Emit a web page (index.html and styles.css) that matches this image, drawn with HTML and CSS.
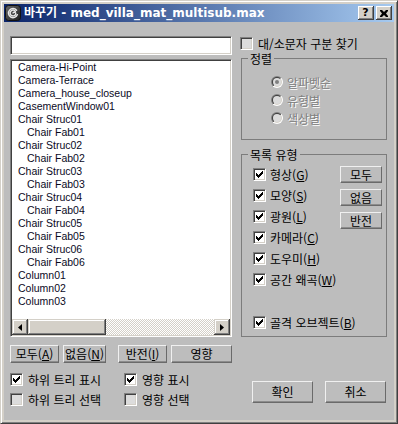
FILE: index.html
```html
<!DOCTYPE html>
<html lang="ko">
<head>
<meta charset="utf-8">
<title>바꾸기</title>
<link rel="stylesheet" href="styles.css">
</head>
<body>
<div class="window">
  <div class="titlebar">
    <svg class="appicon" width="16" height="16" viewBox="0 0 16 16">
      <defs>
        <linearGradient id="ig" x1="0" y1="0" x2="1" y2="1">
          <stop offset="0" stop-color="#6a6a6a"/>
          <stop offset="1" stop-color="#1e1e1e"/>
        </linearGradient>
      </defs>
      <rect x="0.5" y="0.5" width="15" height="15" rx="3" fill="url(#ig)" stroke="#111"/>
      <path d="M11.6 5.2 A4.6 4.6 0 1 0 12.4 9.6 M10.4 6.4 A2.9 2.9 0 1 0 10.6 9.4 A1.4 1.4 0 0 0 8 8" fill="none" stroke="#e8e8e8" stroke-width="1.4" stroke-linecap="round"/>
    </svg>
    <span class="title">바꾸기 - med_villa_mat_multisub.max</span>
    <div class="tbtns">
      <span class="tbtn help">?</span>
      <span class="tbtn close"><svg width="8" height="7" viewBox="0 0 8 7"><path d="M0 0h2l2 2 2-2h2v1L6 3.5 8 6v1H6L4 5 2 7H0V6l2-2.5L0 1z" fill="#000"/></svg></span>
    </div>
  </div>
  <div class="client">
    <div class="left">
      <div class="search"></div>
      <div class="list">
        <div class="items">
          <div class="item">Camera-Hi-Point</div>
          <div class="item">Camera-Terrace</div>
          <div class="item">Camera_house_closeup</div>
          <div class="item">CasementWindow01</div>
          <div class="item">Chair Struc01</div>
          <div class="item child">Chair Fab01</div>
          <div class="item">Chair Struc02</div>
          <div class="item child">Chair Fab02</div>
          <div class="item">Chair Struc03</div>
          <div class="item child">Chair Fab03</div>
          <div class="item">Chair Struc04</div>
          <div class="item child">Chair Fab04</div>
          <div class="item">Chair Struc05</div>
          <div class="item child">Chair Fab05</div>
          <div class="item">Chair Struc06</div>
          <div class="item child">Chair Fab06</div>
          <div class="item">Column01</div>
          <div class="item">Column02</div>
          <div class="item">Column03</div>
        </div>
        <div class="hscroll">
          <span class="sbtn"><svg width="4" height="7" viewBox="0 0 4 7"><path d="M4 0v7L0 3.5z" fill="#000"/></svg></span>
          <span class="thumb"></span>
          <span class="track"></span>
          <span class="sbtn"><svg width="4" height="7" viewBox="0 0 4 7"><path d="M0 0v7l4-3.5z" fill="#000"/></svg></span>
        </div>
      </div>
      <div class="btnrow">
        <span class="btn w49">모두(<u>A</u>)</span>
        <span class="btn w43 ml4">없음(<u>N</u>)</span>
        <span class="btn w49 ml12">반전(<u>I</u>)</span>
        <span class="btn w61 ml4">영향</span>
      </div>
      <div class="checks">
        <div class="chk"><span class="cb on"><svg width="11" height="11" viewBox="1 1 11 11"><path d="M3 5h1v1h1v1h1v-1h1v-1h1v-1h1v-1h1v3h-1v1h-1v1h-1v1h-1v1h-1v-1h-1v-1h-1z"/></svg></span><span>하위 트리 표시</span></div>
        <div class="chk"><span class="cb on"><svg width="11" height="11" viewBox="1 1 11 11"><path d="M3 5h1v1h1v1h1v-1h1v-1h1v-1h1v-1h1v3h-1v1h-1v1h-1v1h-1v1h-1v-1h-1v-1h-1z"/></svg></span><span>영향 표시</span></div>
        <div class="chk"><span class="cb off"></span><span>하위 트리 선택</span></div>
        <div class="chk"><span class="cb off"></span><span>영향 선택</span></div>
      </div>
    </div>
    <div class="right">
      <div class="chk case"><span class="cb off"></span><span>대/소문자 구분 찾기</span></div>
      <div class="group sort">
        <span class="legend">정렬</span>
        <div class="radio"><svg class="rd" width="12" height="12" viewBox="0 0 12 12"><use href="#radio"/><circle cx="6" cy="6" r="2" fill="#808080"/></svg><span class="dis">알파벳순</span></div>
        <div class="radio"><svg class="rd" width="12" height="12" viewBox="0 0 12 12"><use href="#radio"/></svg><span class="dis">유형별</span></div>
        <div class="radio"><svg class="rd" width="12" height="12" viewBox="0 0 12 12"><use href="#radio"/></svg><span class="dis">색상별</span></div>
      </div>
      <div class="group types">
        <span class="legend">목록 유형</span>
        <div class="tchecks">
          <div class="chk row"><span class="cb on"><svg width="11" height="11" viewBox="1 1 11 11"><path d="M3 5h1v1h1v1h1v-1h1v-1h1v-1h1v-1h1v3h-1v1h-1v1h-1v1h-1v1h-1v-1h-1v-1h-1z"/></svg></span><span>형상(<u>G</u>)</span></div>
          <div class="chk row"><span class="cb on"><svg width="11" height="11" viewBox="1 1 11 11"><path d="M3 5h1v1h1v1h1v-1h1v-1h1v-1h1v-1h1v3h-1v1h-1v1h-1v1h-1v1h-1v-1h-1v-1h-1z"/></svg></span><span>모양(<u>S</u>)</span></div>
          <div class="chk row"><span class="cb on"><svg width="11" height="11" viewBox="1 1 11 11"><path d="M3 5h1v1h1v1h1v-1h1v-1h1v-1h1v-1h1v3h-1v1h-1v1h-1v1h-1v1h-1v-1h-1v-1h-1z"/></svg></span><span>광원(<u>L</u>)</span></div>
          <div class="chk row"><span class="cb on"><svg width="11" height="11" viewBox="1 1 11 11"><path d="M3 5h1v1h1v1h1v-1h1v-1h1v-1h1v-1h1v3h-1v1h-1v1h-1v1h-1v1h-1v-1h-1v-1h-1z"/></svg></span><span>카메라(<u>C</u>)</span></div>
          <div class="chk row"><span class="cb on"><svg width="11" height="11" viewBox="1 1 11 11"><path d="M3 5h1v1h1v1h1v-1h1v-1h1v-1h1v-1h1v3h-1v1h-1v1h-1v1h-1v1h-1v-1h-1v-1h-1z"/></svg></span><span>도우미(<u>H</u>)</span></div>
          <div class="chk row"><span class="cb on"><svg width="11" height="11" viewBox="1 1 11 11"><path d="M3 5h1v1h1v1h1v-1h1v-1h1v-1h1v-1h1v3h-1v1h-1v1h-1v1h-1v1h-1v-1h-1v-1h-1z"/></svg></span><span>공간 왜곡(<u>W</u>)</span></div>
          <div class="chk row bones"><span class="cb on"><svg width="11" height="11" viewBox="1 1 11 11"><path d="M3 5h1v1h1v1h1v-1h1v-1h1v-1h1v-1h1v3h-1v1h-1v1h-1v1h-1v1h-1v-1h-1v-1h-1z"/></svg></span><span>골격 오브젝트(<u>B</u>)</span></div>
        </div>
        <div class="tbtncol">
          <span class="btn sm">모두</span>
          <span class="btn sm">없음</span>
          <span class="btn sm">반전</span>
        </div>
      </div>
      <div class="okrow">
        <span class="btn ok">확인</span>
        <span class="btn ok">취소</span>
      </div>
    </div>
  </div>
</div>
<svg class="defs" width="0" height="0">
  <defs>
    <linearGradient id="rg1" x1="0" y1="0" x2="1" y2="1">
      <stop offset="0.5" stop-color="#808080"/><stop offset="0.5" stop-color="#ffffff"/>
    </linearGradient>
    <linearGradient id="rg2" x1="0" y1="0" x2="1" y2="1">
      <stop offset="0.5" stop-color="#404040"/><stop offset="0.5" stop-color="#d4d0c8"/>
    </linearGradient>
    <g id="radio">
      <circle cx="6" cy="6" r="6" fill="url(#rg1)"/>
      <circle cx="6" cy="6" r="5" fill="url(#rg2)"/>
      <circle cx="6" cy="6" r="4" fill="#dcdcdc"/>
    </g>
  </defs>
</svg>
</body>
</html>
```
FILE: styles.css
```css
html, body {
  margin: 0;
  padding: 0;
  background: #bdbdbd;
}
.defs {
  display: block;
  width: 0;
  height: 0;
}
.window {
  width: 398px;
  height: 424px;
  box-sizing: border-box;
  border: 1px solid;
  border-color: #d4d0c8 #404040 #404040 #d4d0c8;
  box-shadow: inset 1px 1px #ffffff, inset -1px -1px #808080;
  padding: 3px;
  background: #d4d0c8;
  display: flex;
  flex-direction: column;
  font-family: "Noto Sans CJK KR", "DejaVu Sans", sans-serif;
  font-size: 12px;
  color: #000;
}
.titlebar {
  height: 18px;
  flex: none;
  display: flex;
  align-items: center;
  padding-left: 1px;
  background: linear-gradient(to right, #0a246a, #a6caf0);
  color: #fff;
}
.appicon {
  flex: none;
  margin-right: 3px;
}
.title {
  flex: 1;
  font-family: "DejaVu Sans", "Noto Sans CJK KR", sans-serif;
  font-weight: bold;
  font-size: 12px;
  line-height: 18px;
  white-space: nowrap;
}
.tbtns {
  display: flex;
  gap: 2px;
  margin-right: 2px;
}
.tbtn {
  width: 16px;
  height: 14px;
  box-sizing: border-box;
  background: #d4d0c8;
  box-shadow: inset -1px -1px #404040, inset 1px 1px #ffffff, inset -2px -2px #808080;
  display: flex;
  align-items: center;
  justify-content: center;
  color: #000;
}
.help {
  font-family: "DejaVu Sans", sans-serif;
  font-weight: bold;
  font-size: 11px;
  line-height: 14px;
  padding-right: 1px;
}
.close svg {
  display: block;
  margin-right: 1px;
}
.client {
  flex: 1;
  background: #bdbdbd;
  display: flex;
  padding: 14px 0 0 6px;
}
.left {
  width: 222px;
  display: flex;
  flex-direction: column;
}
.search, .list {
  box-sizing: border-box;
  background: #fff;
  border: 1px solid;
  border-color: #808080 #ffffff #ffffff #808080;
  box-shadow: inset 1px 1px #404040, inset -1px -1px #d4d0c8;
}
.search {
  height: 19px;
}
.list {
  margin-top: 4px;
  height: 278px;
  display: flex;
  flex-direction: column;
}
.items {
  flex: 1;
  overflow: hidden;
  padding: 1px 0 0 7px;
  font-family: "Liberation Sans", Arial, sans-serif;
  font-size: 10.5px;
  line-height: 13px;
  color: #0a0a1e;
}
.item.child {
  padding-left: 9px;
}
.hscroll {
  height: 16px;
  margin: 0 1px 1px 1px;
  display: flex;
  flex: none;
}
.sbtn, .thumb {
  background: #d4d0c8;
  box-shadow: inset -1px -1px #404040, inset 1px 1px #d4d0c8, inset -2px -2px #808080, inset 2px 2px #ffffff;
}
.sbtn {
  width: 16px;
  display: flex;
  align-items: center;
  justify-content: center;
}
.thumb {
  width: 78px;
}
.track {
  flex: 1;
  background: repeating-conic-gradient(#ffffff 0 25%, #d4d0c8 0 50%) 0 0 / 2px 2px;
}
.btn {
  box-sizing: border-box;
  display: flex;
  align-items: center;
  justify-content: center;
  background: #bdbdbd;
  border: 1px solid;
  border-color: #f0f0f0 #6a6a6a #6a6a6a #f0f0f0;
  box-shadow: inset 0 -1px #8c8c8c;
  font-size: 12px;
  line-height: 14px;
  white-space: nowrap;
}
.btnrow {
  margin-top: 8px;
  height: 18px;
  display: flex;
}
.btnrow .btn {
  height: 18px;
}
.w49 { width: 49px; }
.w43 { width: 43px; }
.w61 { width: 61px; }
.ml4 { margin-left: 4px; }
.ml12 { margin-left: 12px; }
.checks {
  margin-top: 10px;
  display: grid;
  grid-template-columns: 114px 1fr;
  grid-auto-rows: 13px;
  row-gap: 7px;
}
.chk {
  display: flex;
  align-items: center;
  gap: 5px;
  white-space: nowrap;
  line-height: 13px;
}
.cb {
  width: 13px;
  height: 13px;
  flex: none;
  box-sizing: border-box;
  border: 1px solid;
  border-color: #808080 #ffffff #ffffff #808080;
  box-shadow: inset 1px 1px #404040, inset -1px -1px #d4d0c8;
  background: #ffffff;
}
.cb.off {
  background: #dcdcdc;
}
.cb svg {
  display: block;
  fill: #000;
}
.right {
  margin-left: 8px;
  width: 148px;
  display: flex;
  flex-direction: column;
}
.case {
  margin-top: 1px;
  height: 13px;
}
.group {
  position: relative;
  box-sizing: border-box;
  margin-left: 1px;
  width: 146px;
  border: 1px solid #7c7c7c;
}
.legend {
  position: absolute;
  top: -8px;
  left: 6px;
  padding: 0 2px;
  background: #bdbdbd;
  line-height: 15px;
}
.sort {
  margin-top: 8px;
  height: 82px;
  padding: 14px 0 0 29px;
}
.radio {
  height: 18px;
  display: flex;
  align-items: center;
  gap: 4px;
}
.rd {
  flex: none;
  display: block;
}
.dis {
  color: #808080;
  text-shadow: 1px 1px 0 #ffffff;
}
.types {
  margin-top: 14px;
  height: 183px;
  padding: 9px 4px 0 11px;
  display: flex;
}
.tchecks {
  width: 86px;
  flex: none;
  display: flex;
  flex-direction: column;
}
.types .row {
  height: 21px;
  gap: 4px;
}
.types .bones {
  margin-top: 22px;
}
.tbtncol {
  margin-left: auto;
  margin-top: 2px;
  display: flex;
  flex-direction: column;
  gap: 6px;
}
.btn.sm {
  width: 42px;
  height: 17px;
}
.okrow {
  margin-top: 44px;
  padding-left: 12px;
  display: flex;
  gap: 12px;
}
.btn.ok {
  width: 61px;
  height: 22px;
}
```
